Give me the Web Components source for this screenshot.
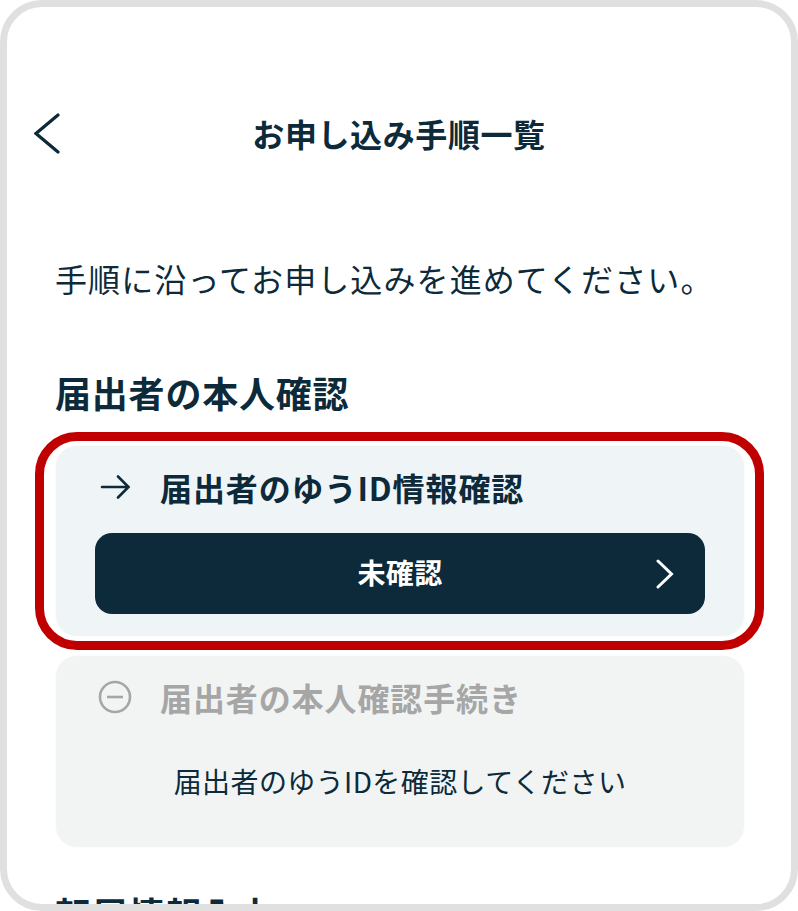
<!DOCTYPE html>
<html lang="ja">
<head>
<meta charset="utf-8">
<title>お申し込み手順一覧</title>
<style>
    html, body { margin: 0; padding: 0; background: #fff; }
    body { font-family: "Noto Sans CJK JP", "Noto Sans", sans-serif; color: #0c2a3a; }
</style>
</head>
<body>
<phone-frame>
    <nav-header>お申し込み手順一覧</nav-header>
    <lead-text>手順に沿ってお申し込みを進めてください。</lead-text>
    <section-title>届出者の本人確認</section-title>
    <step-card active heading="届出者のゆうID情報確認">
        <status-button>未確認</status-button>
    </step-card>
    <step-card disabled heading="届出者の本人確認手続き">届出者のゆうIDを確認してください</step-card>
    <section-title>転居情報入力</section-title>
</phone-frame>

<script>
// Outer device frame
class PhoneFrame extends HTMLElement {
    constructor() {
        super();
        this.attachShadow({ mode: 'open' });
        this.shadowRoot.innerHTML = `
            <style>
                :host {
                    display: block;
                    box-sizing: border-box;
                    width: 798px;
                    height: 911px;
                    border: 7px solid #e0e0e0;
                    border-radius: 42px;
                    overflow: hidden;
                    background: #fff;
                }
                .content { display: flex; flex-direction: column; }
            </style>
            <div class="content"><slot></slot></div>
        `;
    }
}
customElements.define('phone-frame', PhoneFrame);

// Top bar with back chevron
class NavHeader extends HTMLElement {
    constructor() {
        super();
        this.attachShadow({ mode: 'open' });
        this.shadowRoot.innerHTML = `
            <style>
                :host {
                    display: grid;
                    grid-template-columns: 1fr auto 1fr;
                    align-items: center;
                    height: 96px;
                    margin-top: 78px;
                    padding: 0 27px;
                }
                svg { display: block; width: 26px; height: 42px; }
                .title {
                    font-size: 32px;
                    font-weight: 700;
                    line-height: 40px;
                    letter-spacing: 0.6px;
                    white-space: nowrap;
                }
            </style>
            <svg viewBox="0 0 26 42" fill="none" stroke="#0c2a3a" stroke-width="3.2" stroke-linecap="round" stroke-linejoin="miter">
                <path d="M24 3 L2 21.5 L24 40"/>
            </svg>
            <div class="title"><slot></slot></div>
            <span></span>
        `;
    }
}
customElements.define('nav-header', NavHeader);

// Intro sentence under the header
class LeadText extends HTMLElement {
    constructor() {
        super();
        this.attachShadow({ mode: 'open' });
        this.shadowRoot.innerHTML = `
            <style>
                :host {
                    display: block;
                    padding: 0 48px 25px;
                    margin-top: 73px;
                    font-size: 32px;
                    line-height: 48px;
                    letter-spacing: 1.1px;
                    white-space: nowrap;
                }
            </style>
            <slot></slot>
        `;
    }
}
customElements.define('lead-text', LeadText);

// Section heading
class SectionTitle extends HTMLElement {
    constructor() {
        super();
        this.attachShadow({ mode: 'open' });
        this.shadowRoot.innerHTML = `
            <style>
                :host {
                    display: block;
                    padding: 0 48px;
                    margin-top: 41px;
                    font-size: 36px;
                    font-weight: 700;
                    line-height: 48px;
                    letter-spacing: 0.8px;
                    white-space: nowrap;
                }
            </style>
            <slot></slot>
        `;
    }
}
customElements.define('section-title', SectionTitle);

// Dark action button
class StatusButton extends HTMLElement {
    constructor() {
        super();
        this.attachShadow({ mode: 'open' });
        this.shadowRoot.innerHTML = `
            <style>
                :host {
                    display: grid;
                    grid-template-columns: 1fr auto 1fr;
                    align-items: center;
                    height: 81px;
                    padding: 0 31px 0 0;
                    border-radius: 17px;
                    background: #0c2a3a;
                    color: #fff;
                    font-size: 28px;
                    font-weight: 700;
                }
                svg { display: block; width: 18px; height: 30px; justify-self: end; }
                .label { padding-left: 31px; padding-bottom: 3px; }
            </style>
            <span></span>
            <span class="label"><slot></slot></span>
            <svg viewBox="0 0 18 30" fill="none" stroke="#fff" stroke-width="3" stroke-linecap="round">
                <path d="M2 2 L15.5 15 L2 28"/>
            </svg>
        `;
    }
}
customElements.define('status-button', StatusButton);

// One step of the procedure
class StepCard extends HTMLElement {
    constructor() {
        super();
        this.attachShadow({ mode: 'open' });
    }
    connectedCallback() {
        const disabled = this.hasAttribute('disabled');
        const icon = disabled
            ? `<svg viewBox="0 0 40 34" fill="none" stroke="#a6a6a6" stroke-width="2.6"><circle cx="20" cy="17" r="15"/><path d="M12 17 H28"/></svg>`
            : `<svg viewBox="0 0 40 34" fill="none" stroke="#0c2a3a" stroke-width="2.6" stroke-linecap="round"><path d="M7 17 H33 M23 6.5 L33.5 17 L23 27.5"/></svg>`;
        this.shadowRoot.innerHTML = `
            <style>
                :host {
                    display: block;
                    position: relative;
                    box-sizing: border-box;
                    margin: 0 46px 0 48px;
                    border-radius: 22px;
                    background: #eff4f7;
                    padding: 16px 39px 23px;
                    border: 1px solid #fbfcfd;
                }
                :host([disabled]) {
                    background: #f2f4f4;
                    margin-top: 18px;
                    height: 193px;
                    padding-top: 16px;
                }
                :host([active]) { margin-top: 29px; height: 192px; }
                .head {
                    display: flex;
                    align-items: center;
                    gap: 25px;
                    height: 50px;
                    margin-bottom: 21px;
                    font-size: 32px;
                    font-weight: 700;
                    letter-spacing: 0.9px;
                    white-space: nowrap;
                }
                :host([disabled]) .head { color: #a6a6a6; margin-bottom: 39px; }
                svg { display: block; width: 40px; height: 34px; flex: none; }
                .body { font-size: 28px; letter-spacing: 0.4px; text-align: center; line-height: 40px; white-space: nowrap; }
                /* red highlight drawn over the active card */
                .ring {
                    position: absolute;
                    inset: -14px -20px -14px -21px;
                    border: 9px solid #c00000;
                    border-radius: 42px;
                    pointer-events: none;
                }
            </style>
            <div class="head">${icon}<span>${this.getAttribute('heading')}</span></div>
            <div class="body"><slot></slot></div>
            ${this.hasAttribute('active') ? '<div class="ring"></div>' : ''}
        `;
    }
}
customElements.define('step-card', StepCard);
</script>
</body>
</html>
